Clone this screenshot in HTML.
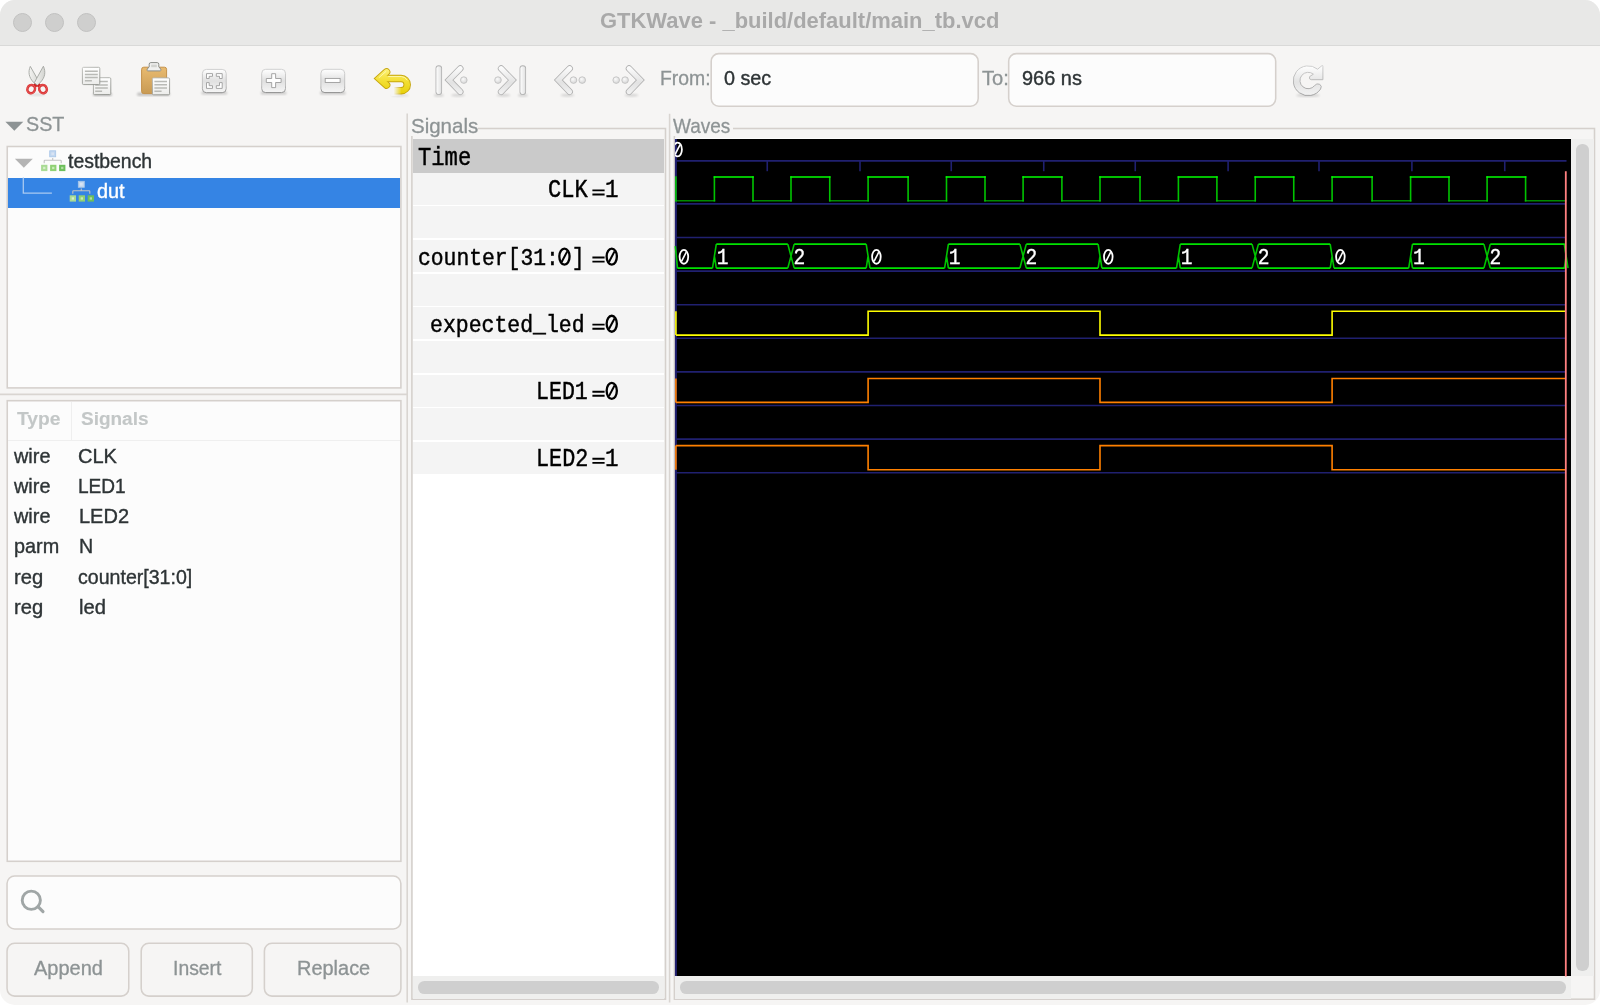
<!DOCTYPE html>
<html>
<head>
<meta charset="utf-8">
<title>GTKWave</title>
<style>
*{box-sizing:border-box;margin:0;padding:0}
html,body{width:1600px;height:1005px;overflow:hidden;background:#fff}
body{font-family:"Liberation Sans",sans-serif;font-size:18.9px;color:#2e3436;position:relative}
.abs{position:absolute}
.win{will-change:transform;position:absolute;left:0;top:0;width:1600px;height:1005px;background:#f6f5f4;border-radius:15px;overflow:hidden}
.titlebar{position:absolute;left:0;top:0;width:1600px;height:45.5px;background:#e8e8e7;border-bottom:1.5px solid #d9d9d8}
.tl{position:absolute;top:12.7px;width:19.2px;height:19.2px;border-radius:50%;background:#cfcfce;border:1px solid #c1c1c0}
.t{position:absolute;white-space:nowrap;transform-origin:0 0}
.sigrow{position:absolute;left:413px;width:250.9px;background:#f4f4f4}
</style>
</head>
<body>
<div class="win">
  <!-- title bar -->
  <div class="titlebar"></div>
  <div class="tl" style="left:12.7px"></div>
  <div class="tl" style="left:44.8px"></div>
  <div class="tl" style="left:76.7px"></div>

  <svg class="abs" style="left:0;top:0" width="1600" height="140" viewBox="0 0 1600 140" id="icons">
<defs>
  <linearGradient id="gBtn" x1="0" y1="0" x2="0" y2="1"><stop offset="0" stop-color="#ffffff"/><stop offset=".5" stop-color="#e0e0e0"/><stop offset="1" stop-color="#f6f6f6"/></linearGradient>
  <linearGradient id="gBtnS" x1="0" y1="0" x2="0" y2="1"><stop offset="0" stop-color="#d0d0d0"/><stop offset=".7" stop-color="#bdbdbd"/><stop offset="1" stop-color="#8e8e8e"/></linearGradient>
  <linearGradient id="gChev" x1="0" y1="0" x2="0" y2="1"><stop offset="0" stop-color="#ffffff"/><stop offset=".55" stop-color="#e3e3e3"/><stop offset="1" stop-color="#f2f2f2"/></linearGradient>
  <linearGradient id="gChevS" x1="0" y1="0" x2="0" y2="1"><stop offset="0" stop-color="#cfcfcf"/><stop offset="1" stop-color="#a2a2a2"/></linearGradient>
  <linearGradient id="gPage" x1="0" y1="0" x2="0" y2="1"><stop offset="0" stop-color="#ffffff"/><stop offset="1" stop-color="#ececea"/></linearGradient>
  <linearGradient id="gBoard" x1="0" y1="0" x2="0" y2="1"><stop offset="0" stop-color="#e9bb70"/><stop offset="1" stop-color="#c89a54"/></linearGradient>
  <linearGradient id="gUndo" x1="0" y1="0" x2="0" y2="1"><stop offset="0" stop-color="#fdf07a"/><stop offset=".5" stop-color="#f3df2e"/><stop offset="1" stop-color="#e3cb08"/></linearGradient>
  <linearGradient id="gUndoFade" x1="0" y1="0" x2="1" y2="0"><stop offset="0" stop-color="#f6f5f4" stop-opacity="1"/><stop offset=".25" stop-color="#f6f5f4" stop-opacity="1"/><stop offset="1" stop-color="#f6f5f4" stop-opacity="0"/></linearGradient>
  <radialGradient id="gDot" cx=".4" cy=".35" r=".7"><stop offset="0" stop-color="#fafafa"/><stop offset="1" stop-color="#d4d4d4"/></radialGradient>
  <linearGradient id="gBlade" x1="0" y1="0" x2="1" y2="0"><stop offset="0" stop-color="#f4f4f2"/><stop offset="1" stop-color="#d3d4d0"/></linearGradient>
  <filter id="sh" x="-30%" y="-30%" width="160%" height="160%"><feGaussianBlur stdDeviation="1.3"/></filter>
  <linearGradient id="gChevU" gradientUnits="userSpaceOnUse" x1="0" y1="65" x2="0" y2="95"><stop offset="0" stop-color="#ffffff"/><stop offset=".6" stop-color="#e2e2e2"/><stop offset="1" stop-color="#f3f3f3"/></linearGradient>
  <linearGradient id="gBarU" gradientUnits="userSpaceOnUse" x1="436" y1="0" x2="442" y2="0"><stop offset="0" stop-color="#ffffff"/><stop offset="1" stop-color="#dedede"/></linearGradient>
  <linearGradient id="gBarU2" gradientUnits="userSpaceOnUse" x1="520" y1="0" x2="526" y2="0"><stop offset="0" stop-color="#ffffff"/><stop offset="1" stop-color="#dedede"/></linearGradient>
  <g id="zb">
    <rect x="-13" y="10.6" width="26" height="3" rx="1.5" fill="#000" opacity=".17" filter="url(#sh)"/>
    <rect x="-11.9" y="-11.6" width="23.8" height="23.3" rx="4" fill="url(#gBtn)" stroke="url(#gBtnS)" stroke-width="1"/>
  </g>
  <linearGradient id="gUndoU" gradientUnits="userSpaceOnUse" x1="0" y1="68" x2="0" y2="95"><stop offset="0" stop-color="#fdf280"/><stop offset=".45" stop-color="#f4e038"/><stop offset="1" stop-color="#e6cf06"/></linearGradient>
  <linearGradient id="gPgS" x1="0" y1="0" x2=".6" y2="1"><stop offset="0" stop-color="#bbbcb8"/><stop offset="1" stop-color="#8e908b"/></linearGradient>
</defs>

<!-- scissors -->
<g>
  <ellipse cx="37" cy="94.6" rx="9" ry="1.2" fill="#000" opacity=".10" filter="url(#sh)"/>
  <path d="M30.3 66.4C27.9 72 28.9 77.4 33.4 82.2L36.5 85.4L39.4 82.4Z" fill="url(#gBlade)" stroke="#a3a5a0" stroke-width=".9" stroke-linejoin="round"/>
  <path d="M43.4 66.2C46 72 45 77.5 40.5 82.2L37.5 85.4L34.4 82.6Z" fill="url(#gBlade)" stroke="#a3a5a0" stroke-width=".9" stroke-linejoin="round"/>
  <path d="M33.8 84.4L36.8 86.6M40.4 84.4L37.4 86.6" stroke="#cc2222" stroke-width="2.4" fill="none"/>
  <g fill="none" stroke="#d83131" stroke-width="2.5">
    <ellipse cx="31.2" cy="89.1" rx="3.75" ry="4.1" transform="rotate(20 31.2 89.1)"/>
    <ellipse cx="43" cy="89.1" rx="3.75" ry="4.1" transform="rotate(-20 43 89.1)"/>
  </g>
  <g fill="none" stroke="#ef6a6a" stroke-width=".8" opacity=".75">
    <ellipse cx="31.2" cy="89.1" rx="3.9" ry="4.25" transform="rotate(20 31.2 89.1)"/>
    <ellipse cx="43" cy="89.1" rx="3.9" ry="4.25" transform="rotate(-20 43 89.1)"/>
  </g>
</g>

<!-- copy -->
<g>
  <rect x="93" y="93" width="19" height="3" rx="1.5" fill="#000" opacity=".25" filter="url(#sh)"/>
  <rect x="93.4" y="77.7" width="17.4" height="16.9" rx="1.2" fill="url(#gPage)" stroke="url(#gPgS)" stroke-width=".9"/>
  <path d="M95.2 81.6H107.8M95.2 84.9H107.8M95.2 88H107.8M95.2 91.2H102.1" stroke="#b9bab6" stroke-width="1.5"/>
  <rect x="82.4" y="67.3" width="17.4" height="17.3" rx="1.2" fill="url(#gPage)" stroke="url(#gPgS)" stroke-width=".9"/>
  <path d="M84.9 71.2H97.8M84.9 74.4H97.8M84.9 77.5H97.8M84.9 80.7H91.9" stroke="#b9bab6" stroke-width="1.5"/>
</g>

<!-- paste -->
<g>
  <rect x="137" y="92.5" width="33" height="3.4" rx="1.7" fill="#000" opacity=".2" filter="url(#sh)"/>
  <rect x="141.6" y="67.2" width="25" height="26.4" rx="2.2" fill="url(#gBoard)" stroke="#c4914a" stroke-width="1"/>
  <path d="M149.2 66.8V64.2Q149.2 62.6 150.8 62.6H157.2Q158.8 62.6 158.8 64.2V66.8L160.8 69.2V70.4Q160.8 70.9 160.2 70.9H147.8Q147.2 70.9 147.2 70.4V69.2Z" fill="#f0f0ee" stroke="#8b8d88" stroke-width="1" stroke-linejoin="round"/>
  <rect x="151.2" y="64.6" width="5.6" height="2.6" fill="#d2d3cf"/>
  <rect x="152.4" y="77.9" width="17.2" height="16.9" rx="1.2" fill="url(#gPage)" stroke="url(#gPgS)" stroke-width=".9"/>
  <path d="M154.4 81.5H167M154.4 84.8H167M154.4 88H167M154.4 91.2H161.6" stroke="#b9bab6" stroke-width="1.5"/>
</g>

<!-- zoom fit / in / out -->
<use href="#zb" x="214.3" y="81"/>
<use href="#zb" x="273.6" y="80.9"/>
<use href="#zb" x="332.8" y="80.9"/>
<g fill="#fff" stroke="#979797" stroke-width=".85" stroke-linejoin="miter">
  <path d="M206.5 73.6H212.5V76.3H209.2V78.5H206.5Z"/>
  <path d="M222.2 73.6H216.3V76.3H219.5V78.5H222.2Z"/>
  <path d="M206.5 88.4H212.5V85.7H209.2V82.6H206.5Z"/>
  <path d="M222.2 88.4H216.3V85.7H219.5V82.6H222.2Z"/>
  <path d="M271.7 73.7H275.6V78.5H281.1V82.5H275.6V87.6H271.7V82.5H266.3V78.5H271.7Z"/>
  <rect x="325.2" y="78.4" width="14.9" height="4"/>
</g>

<!-- undo -->
<g fill="none" stroke-linecap="round" stroke-linejoin="miter" stroke-miterlimit="6">
  <ellipse cx="400" cy="95.4" rx="9" ry="1.3" fill="#000" stroke="none" opacity=".10" filter="url(#sh)"/>
  <g stroke="#c6a60e" stroke-width="7.5">
    <path d="M379.5 78.5H401.1A6.125 6.125 0 0 1 401.1 90.75H392.5" stroke-linecap="butt"/>
    <path d="M386.6 71.9L379.2 78.5L386.6 85.1"/>
  </g>
  <g stroke="url(#gUndoU)" stroke-width="5.7">
    <path d="M379.5 78.5H401.1A6.125 6.125 0 0 1 401.1 90.75H392.5" stroke-linecap="butt"/>
    <path d="M386.6 71.9L379.2 78.5L386.6 85.1"/>
  </g>
  <path d="M385.8 71.6L379.2 77.5M388.6 76.5H401.4A7 7 0 0 1 407 80" stroke="#fffbc4" stroke-width="1" opacity=".75"/>
  <rect x="391" y="86" width="10.5" height="10" fill="url(#gUndoFade)" stroke="none"/>
</g>

<!-- nav chevrons -->
<g fill="#000" opacity=".13" filter="url(#sh)">
  <ellipse cx="438.8" cy="95.2" rx="5" ry="1.5"/><ellipse cx="458" cy="95.2" rx="7" ry="1.5"/><ellipse cx="522.8" cy="95.2" rx="5" ry="1.5"/><ellipse cx="503.5" cy="95.2" rx="7" ry="1.5"/>
  <ellipse cx="567.5" cy="95.2" rx="7" ry="1.5"/><ellipse cx="631.5" cy="95.2" rx="7" ry="1.5"/>
</g>
<g fill="none" stroke-linecap="round" stroke-linejoin="miter" stroke-miterlimit="10">
  <g stroke="#b0b0b0" stroke-width="6.5">
    <path d="M438.8 68.6V91.8"/><path d="M522.8 68.6V91.8"/>
    <path id="cl" d="M460.3 68.5L449 80.1L460.3 91.7"/>
    <path id="cr" d="M501.1 68.5L512.4 80.1L501.1 91.7"/>
    <use href="#cl" x="109.4"/><use href="#cr" x="127.9"/>
  </g>
  <g stroke="url(#gChevU)" stroke-width="4.9">
    <path d="M438.8 68.6V91.8" stroke="url(#gBarU)"/><path d="M522.8 68.6V91.8" stroke="url(#gBarU2)"/>
    <use href="#cl"/><use href="#cr"/>
    <use href="#cl" x="109.4"/><use href="#cr" x="127.9"/>
  </g>
</g>
<g fill="url(#gDot)" stroke="#bcbcbc" stroke-width=".8">
  <circle cx="463.8" cy="80.1" r="3.3"/>
  <circle cx="498" cy="80.1" r="3.3"/>
  <circle cx="573.5" cy="80.1" r="3.3"/><circle cx="582.2" cy="80.1" r="3.3"/>
  <circle cx="616.2" cy="80.1" r="3.3"/><circle cx="625.1" cy="80.1" r="3.3"/>
</g>

<!-- reload -->
<g>
  <ellipse cx="1308" cy="95.4" rx="12" ry="1.6" fill="#000" opacity=".14" filter="url(#sh)"/>
  <path d="M1317.6 69.2L1322 65.6Q1322.9 65.2 1322.9 66.2V79.7H1311.2Q1308.6 79.3 1309.6 76.6L1313.4 74.2A8.2 8.2 0 1 0 1314.6 85.6Q1316.6 83 1319.6 84.2Q1322.4 86 1320.6 89A14.9 14.9 0 1 1 1317.6 69.2Z" fill="url(#gChev)" stroke="url(#gChevS)" stroke-width="1" stroke-linejoin="round"/>
</g>
</svg>

  <svg class="abs" style="left:0;top:0" width="1600" height="1005" viewBox="0 0 1600 1005" id="boxes">
    <g fill="#fcfcfc" stroke="#d5d0cc" stroke-width="1.56">
      <rect x="711.2" y="53.6" width="267" height="52.6" rx="7.6"/>
      <rect x="1008.7" y="53.6" width="267" height="52.6" rx="7.6"/>
      <rect x="7.25" y="146.5" width="393.65" height="241.4"/>
      <rect x="7.25" y="400.7" width="393.65" height="460.6"/>
      <rect x="7.05" y="876" width="393.8" height="53" rx="7.6"/>
    </g>
    <g fill="none" stroke="#d5d0cc" stroke-width="1.56">
      <rect x="7.05" y="943.3" width="121.7" height="52.8" rx="7.6"/>
      <rect x="141.2" y="943.3" width="111.1" height="52.8" rx="7.6"/>
      <rect x="264.4" y="943.3" width="136.5" height="52.8" rx="7.6"/>
      <rect x="411.9" y="128.5" width="253.6" height="870.7"/>
      <rect x="674.4" y="128.5" width="920.1" height="870.7"/>
      <path d="M407.2 113.6V1002.4M669.6 113.7V1002.4M0 394.4H407.2" stroke="#d9d5d1"/>
    </g>
  </svg>
  <!-- toolbar labels/entries -->

  <!-- SST -->
  <div class="abs" style="left:8px;top:177.6px;width:392px;height:30px;background:#3584e4"></div>

  <!-- signal list -->
  <div class="abs" style="left:8px;top:439.5px;width:392px;height:1.5px;background:#efefef"></div>
  <div class="abs" style="left:70.8px;top:401.5px;width:1.5px;height:38px;background:#efefef"></div>

  <!-- search + buttons -->

<svg class="abs" style="left:0;top:0" width="420" height="1005" viewBox="0 0 420 1005" id="deco">
<defs>
  <g id="hier">
    <rect x="9.5" y="0.4" width="6" height="6" fill="#c3d8f0" stroke="#a9c6e8" stroke-width=".8"/>
    <rect x="11.2" y="2.1" width="2.6" height="2.6" fill="#d9e3f3"/>
    <path d="M12.5 7.6V9.4M4 12.8V10.6Q4 9.9 4.7 9.9H20.3Q21 9.9 21 10.6V12.8" fill="none" stroke="#c2c2c2" stroke-width="1.1"/>
    <rect x="0.9" y="14.4" width="6.3" height="6.3" fill="#a9db94"/>
    <rect x="9.9" y="14.4" width="6.3" height="6.3" fill="#90d174"/>
    <rect x="18.9" y="14.4" width="6.3" height="6.3" fill="#6dbf5b"/>
    <rect x="2.9" y="16.4" width="2.3" height="2.3" fill="#d6efc9"/><rect x="11.9" y="16.4" width="2.3" height="2.3" fill="#c9ebb8"/><rect x="20.9" y="16.4" width="2.3" height="2.3" fill="#b2dfa3"/>
  </g>
</defs>
<path d="M5.4 121.7H23.3L14.35 130.8Z" fill="#8d9394"/>
<path d="M14.9 158.7H32.8L23.85 167.8Z" fill="#b4b4b4"/>
<use href="#hier" x="40.2" y="150.4"/>
<use href="#hier" x="68.8" y="180.9"/>
<path d="M23.3 177.6V193.1H51.9" fill="none" stroke="#a9c9f1" stroke-width="1.3"/>
<g fill="none" stroke="#a0a6a6" stroke-width="2.9">
  <circle cx="31.3" cy="900.25" r="9.1"/>
  <path d="M38 906.6L43 911.7" stroke-linecap="round" stroke-width="3.1"/>
</g>
</svg>
  <!-- paned separators -->

  <!-- Signals frame -->
  <div class="abs" style="left:413px;top:139px;width:250.9px;height:837px;background:#fff"></div>
  <div class="abs" style="left:413px;top:139px;width:250.9px;height:33.6px;background:#cacaca"></div>
  <div class="sigrow" style="top:172.60px;height:32px"></div>
  <div class="sigrow" style="top:206.25px;height:32px"></div>
  <div class="sigrow" style="top:239.90px;height:32px"></div>
  <div class="sigrow" style="top:273.55px;height:32px"></div>
  <div class="sigrow" style="top:307.20px;height:32px"></div>
  <div class="sigrow" style="top:340.85px;height:32px"></div>
  <div class="sigrow" style="top:374.50px;height:32px"></div>
  <div class="sigrow" style="top:408.15px;height:32px"></div>
  <div class="sigrow" style="top:441.80px;height:32px"></div>
  <!-- signals hscroll -->
  <div class="abs" style="left:413px;top:976px;width:250.9px;height:22.5px;background:#efefee"></div>
  <div class="abs" style="left:417.8px;top:981px;width:241.5px;height:12.8px;border-radius:6.4px;background:#cfcfcf"></div>

  <!-- Waves frame -->
  <div class="abs" style="left:675px;top:137.6px;width:896px;height:2px;background:#fdfdfd"></div>
  <!-- wave scrollbars -->
  <div class="abs" style="left:675px;top:976px;width:896px;height:22.7px;background:#efefee"></div>
  <div class="abs" style="left:680px;top:981px;width:886px;height:12.8px;border-radius:6.4px;background:#cfcfcf"></div>
  <div class="abs" style="left:1571px;top:139px;width:23px;height:837px;background:#efefee"></div>
  <div class="abs" style="left:1576.2px;top:143.8px;width:12.4px;height:827.4px;border-radius:6.2px;background:#cfcfcf"></div>

  <div class="abs" style="left:409.5px;top:114px;width:68.5px;height:22px;background:#f6f5f4"></div>
  <div class="abs" style="left:671.5px;top:114px;width:61px;height:22px;background:#f6f5f4"></div>
<div class="t" style="left:599.59px;top:6.35px;font-family:'Liberation Sans',sans-serif;font-size:21.2px;font-weight:bold;color:#a9a9a9;line-height:30px;transform:scaleX(1.0364)">GTKWave - _build/default/main_tb.vcd</div>
<div class="t" style="left:660.44px;top:62.75px;font-family:'Liberation Sans',sans-serif;font-size:20.2px;font-weight:normal;color:#8d9394;line-height:30px;transform:scaleX(0.9609);-webkit-text-stroke:0.3px #8d9394">From:</div>
<div class="t" style="left:724.28px;top:62.92px;font-family:'Liberation Sans',sans-serif;font-size:19.7px;font-weight:normal;color:#2e3436;line-height:30px;transform:scaleX(1.0037);-webkit-text-stroke:0.38px #2e3436">0 sec</div>
<div class="t" style="left:982.34px;top:62.75px;font-family:'Liberation Sans',sans-serif;font-size:20.2px;font-weight:normal;color:#8d9394;line-height:30px;transform:scaleX(0.9982);-webkit-text-stroke:0.3px #8d9394">To:</div>
<div class="t" style="left:1022.25px;top:62.92px;font-family:'Liberation Sans',sans-serif;font-size:19.7px;font-weight:normal;color:#2e3436;line-height:30px;transform:scaleX(1.0129);-webkit-text-stroke:0.38px #2e3436">966 ns</div>
<div class="t" style="left:26.29px;top:109.09px;font-family:'Liberation Sans',sans-serif;font-size:20.8px;font-weight:normal;color:#8d9394;line-height:30px;transform:scaleX(0.9503);-webkit-text-stroke:0.3px #8d9394">SST</div>
<div class="t" style="left:410.53px;top:110.89px;font-family:'Liberation Sans',sans-serif;font-size:20.8px;font-weight:normal;color:#8d9394;line-height:30px;transform:scaleX(0.9851);-webkit-text-stroke:0.3px #8d9394">Signals</div>
<div class="t" style="left:673.23px;top:110.89px;font-family:'Liberation Sans',sans-serif;font-size:20.8px;font-weight:normal;color:#8d9394;line-height:30px;transform:scaleX(0.9127);-webkit-text-stroke:0.3px #8d9394">Waves</div>
<div class="t" style="left:68.18px;top:145.84px;font-family:'Liberation Sans',sans-serif;font-size:19.8px;font-weight:normal;color:#2e3436;line-height:30px;transform:scaleX(0.9810);-webkit-text-stroke:0.38px #2e3436">testbench</div>
<div class="t" style="left:97.43px;top:176.34px;font-family:'Liberation Sans',sans-serif;font-size:19.8px;font-weight:normal;color:#ffffff;line-height:30px;transform:scaleX(1.0038);-webkit-text-stroke:0.38px #ffffff">dut</div>
<div class="t" style="left:16.97px;top:403.65px;font-family:'Liberation Sans',sans-serif;font-size:19.2px;font-weight:bold;color:#c3c7c7;line-height:30px;transform:scaleX(1.0008);-webkit-text-stroke:0.15px #c3c7c7">Type</div>
<div class="t" style="left:81.35px;top:403.65px;font-family:'Liberation Sans',sans-serif;font-size:19.2px;font-weight:bold;color:#c3c7c7;line-height:30px;transform:scaleX(0.9892);-webkit-text-stroke:0.15px #c3c7c7">Signals</div>
<div class="t" style="left:14.41px;top:440.64px;font-family:'Liberation Sans',sans-serif;font-size:19.8px;font-weight:normal;color:#2e3436;line-height:30px;transform:scaleX(1.0050);-webkit-text-stroke:0.38px #2e3436">wire</div>
<div class="t" style="left:78.47px;top:440.64px;font-family:'Liberation Sans',sans-serif;font-size:19.8px;font-weight:normal;color:#2e3436;line-height:30px;transform:scaleX(1.0127);-webkit-text-stroke:0.38px #2e3436">CLK</div>
<div class="t" style="left:14.41px;top:470.89px;font-family:'Liberation Sans',sans-serif;font-size:19.8px;font-weight:normal;color:#2e3436;line-height:30px;transform:scaleX(1.0050);-webkit-text-stroke:0.38px #2e3436">wire</div>
<div class="t" style="left:77.64px;top:470.89px;font-family:'Liberation Sans',sans-serif;font-size:19.8px;font-weight:normal;color:#2e3436;line-height:30px;transform:scaleX(0.9641);-webkit-text-stroke:0.38px #2e3436">LED1</div>
<div class="t" style="left:14.41px;top:501.04px;font-family:'Liberation Sans',sans-serif;font-size:19.8px;font-weight:normal;color:#2e3436;line-height:30px;transform:scaleX(1.0050);-webkit-text-stroke:0.38px #2e3436">wire</div>
<div class="t" style="left:78.56px;top:501.04px;font-family:'Liberation Sans',sans-serif;font-size:19.8px;font-weight:normal;color:#2e3436;line-height:30px;transform:scaleX(1.0109);-webkit-text-stroke:0.38px #2e3436">LED2</div>
<div class="t" style="left:14.39px;top:531.34px;font-family:'Liberation Sans',sans-serif;font-size:19.8px;font-weight:normal;color:#2e3436;line-height:30px;transform:scaleX(1.0015);-webkit-text-stroke:0.38px #2e3436">parm</div>
<div class="t" style="left:78.54px;top:531.34px;font-family:'Liberation Sans',sans-serif;font-size:19.8px;font-weight:normal;color:#2e3436;line-height:30px;transform:scaleX(0.9930);-webkit-text-stroke:0.38px #2e3436">N</div>
<div class="t" style="left:14.38px;top:561.64px;font-family:'Liberation Sans',sans-serif;font-size:19.8px;font-weight:normal;color:#2e3436;line-height:30px;transform:scaleX(1.0198);-webkit-text-stroke:0.38px #2e3436">reg</div>
<div class="t" style="left:78.36px;top:561.64px;font-family:'Liberation Sans',sans-serif;font-size:19.8px;font-weight:normal;color:#2e3436;line-height:30px;transform:scaleX(0.9895);-webkit-text-stroke:0.38px #2e3436">counter[31:0]</div>
<div class="t" style="left:14.38px;top:592.04px;font-family:'Liberation Sans',sans-serif;font-size:19.8px;font-weight:normal;color:#2e3436;line-height:30px;transform:scaleX(1.0198);-webkit-text-stroke:0.38px #2e3436">reg</div>
<div class="t" style="left:78.58px;top:592.04px;font-family:'Liberation Sans',sans-serif;font-size:19.8px;font-weight:normal;color:#2e3436;line-height:30px;transform:scaleX(1.0194);-webkit-text-stroke:0.38px #2e3436">led</div>
<div class="t" style="left:33.56px;top:952.61px;font-family:'Liberation Sans',sans-serif;font-size:19.6px;font-weight:normal;color:#8d9394;line-height:30px;transform:scaleX(1.0206);-webkit-text-stroke:0.3px #8d9394">Append</div>
<div class="t" style="left:172.65px;top:952.61px;font-family:'Liberation Sans',sans-serif;font-size:19.6px;font-weight:normal;color:#8d9394;line-height:30px;transform:scaleX(0.9886);-webkit-text-stroke:0.3px #8d9394">Insert</div>
<div class="t" style="left:296.59px;top:952.61px;font-family:'Liberation Sans',sans-serif;font-size:19.6px;font-weight:normal;color:#8d9394;line-height:30px;transform:scaleX(1.0183);-webkit-text-stroke:0.3px #8d9394">Replace</div>
<div class="t" style="left:418.37px;top:144.19px;font-family:'Liberation Mono',monospace;font-size:25.2px;font-weight:normal;color:#000;line-height:30px;transform:scaleX(0.8806);-webkit-text-stroke:0.45px #000">Time</div>
<div class="t" style="left:548.26px;top:176.49px;font-family:'Liberation Mono',monospace;font-size:25.6px;font-weight:normal;color:#000;line-height:30px;transform:scaleX(0.8609);-webkit-text-stroke:0.45px #000">CLK</div>
<div class="t" style="left:418.03px;top:243.96px;font-family:'Liberation Mono',monospace;font-size:24.2px;font-weight:normal;color:#000;line-height:30px;transform:scaleX(0.8826);-webkit-text-stroke:0.45px #000">counter[31:<span style="visibility:hidden">0</span>]</div>
<div class="t" style="left:430.32px;top:311.06px;font-family:'Liberation Mono',monospace;font-size:24.2px;font-weight:normal;color:#000;line-height:30px;transform:scaleX(0.8873);-webkit-text-stroke:0.45px #000">expected_led</div>
<div class="t" style="left:535.82px;top:377.79px;font-family:'Liberation Mono',monospace;font-size:25.6px;font-weight:normal;color:#000;line-height:30px;transform:scaleX(0.8432);-webkit-text-stroke:0.45px #000">LED1</div>
<div class="t" style="left:535.96px;top:444.89px;font-family:'Liberation Mono',monospace;font-size:25.6px;font-weight:normal;color:#000;line-height:30px;transform:scaleX(0.8519);-webkit-text-stroke:0.45px #000">LED2</div>
<div class="t" style="left:605.22px;top:176.49px;font-family:'Liberation Mono',monospace;font-size:25.6px;font-weight:normal;color:#000;line-height:30px;transform:scaleX(0.8800);-webkit-text-stroke:0.45px #000">1</div>
<div class="t" style="left:605.22px;top:444.89px;font-family:'Liberation Mono',monospace;font-size:25.6px;font-weight:normal;color:#000;line-height:30px;transform:scaleX(0.8800);-webkit-text-stroke:0.45px #000">1</div>
  <svg class="abs" style="left:0;top:0" width="1600" height="1005" viewBox="0 0 1600 1005" id="wave">
<rect x="675" y="139" width="896" height="837" fill="#000"/>
<g stroke="#202070" stroke-width="1.6" fill="none">
<path d="M675 160.9H1566.5"/>
<path d="M767.25 161V171.2"/>
<path d="M860 161V171.2"/>
<path d="M951.25 161V171.2"/>
<path d="M1043.75 161V171.2"/>
<path d="M1135.25 161V171.2"/>
<path d="M1228.1 161V171.2"/>
<path d="M1319 161V171.2"/>
<path d="M1411.9 161V171.2"/>
<path d="M1504.75 161V171.2"/>
<path d="M675 203.90H1565"/>
<path d="M675 237.50H1565"/>
<path d="M675 271.10H1565"/>
<path d="M675 304.70H1565"/>
<path d="M675 338.30H1565"/>
<path d="M675 371.90H1565"/>
<path d="M675 405.50H1565"/>
<path d="M675 439.10H1565"/>
<path d="M675 472.70H1565"/>
<path d="M675.9 139V976" stroke-width="2"/>
</g>
<g stroke-width="1.6" fill="none" stroke-linecap="square">
<path stroke="#008a00" d="M675.9 200.8H714.4M753.0 200.8H791.0M829.75 200.8H868.1M908.1 200.8H946.5M985.0 200.8H1023.1M1061.9 200.8H1100.0M1140.0 200.8H1178.4M1216.9 200.8H1255.25M1293.75 200.8H1332.1M1372.1 200.8H1410.6M1449.0 200.8H1487.1M1525.6 200.8H1565.8"/>
<path stroke="#00c400" d="M714.4 177.0V200.8M753.0 177.0V200.8M791.0 177.0V200.8M829.75 177.0V200.8M868.1 177.0V200.8M908.1 177.0V200.8M946.5 177.0V200.8M985.0 177.0V200.8M1023.1 177.0V200.8M1061.9 177.0V200.8M1100.0 177.0V200.8M1140.0 177.0V200.8M1178.4 177.0V200.8M1216.9 177.0V200.8M1255.25 177.0V200.8M1293.75 177.0V200.8M1332.1 177.0V200.8M1372.1 177.0V200.8M1410.6 177.0V200.8M1449.0 177.0V200.8M1487.1 177.0V200.8M1525.6 177.0V200.8M675.9 177.0V200.8"/>
<path stroke="#00ff00" d="M714.4 177.0H753.0M791.0 177.0H829.75M868.1 177.0H908.1M946.5 177.0H985.0M1023.1 177.0H1061.9M1100.0 177.0H1140.0M1178.4 177.0H1216.9M1255.25 177.0H1293.75M1332.1 177.0H1372.1M1410.6 177.0H1449.0M1487.1 177.0H1525.6"/>
</g>
<g stroke-width="1.6" fill="none">
<path stroke="#00c400" d="M712.50 268.1L716.30 244.1M714.40 256.1L716.30 268.1M787.80 244.1L794.20 268.1M787.80 268.1L794.20 244.1M866.20 244.1L870.00 268.1M866.20 268.1L868.10 256.1M944.60 268.1L948.40 244.1M946.50 256.1L948.40 268.1M1019.90 244.1L1026.30 268.1M1019.90 268.1L1026.30 244.1M1098.10 244.1L1101.90 268.1M1098.10 268.1L1100.00 256.1M1176.50 268.1L1180.30 244.1M1178.40 256.1L1180.30 268.1M1252.05 244.1L1258.45 268.1M1252.05 268.1L1258.45 244.1M1330.20 244.1L1334.00 268.1M1330.20 268.1L1332.10 256.1M1408.70 268.1L1412.50 244.1M1410.60 256.1L1412.50 268.1M1483.90 244.1L1490.30 268.1M1483.90 268.1L1490.30 244.1M675.30 246.1L677.50 268.1M1564.30 244.1L1568.00 268.1M1564.30 268.1L1566.20 256.1"/>
<path stroke="#00e200" d="M677.40 268.1H712.50M716.30 268.1H787.80M716.30 244.1H787.80M794.20 268.1H866.20M794.20 244.1H866.20M870.00 268.1H944.60M948.40 268.1H1019.90M948.40 244.1H1019.90M1026.30 268.1H1098.10M1026.30 244.1H1098.10M1101.90 268.1H1176.50M1180.30 268.1H1252.05M1180.30 244.1H1252.05M1258.45 268.1H1330.20M1258.45 244.1H1330.20M1334.00 268.1H1408.70M1412.50 268.1H1483.90M1412.50 244.1H1483.90M1490.30 268.1H1564.80M1490.30 244.1H1564.80"/>
</g>
<path stroke="#ffff00" stroke-width="1.6" fill="none" stroke-linejoin="miter" d="M675.9 311.3V335.1M675.9 335.1H868.1V311.3H1100.0V335.1H1332.1V311.3H1565.8"/>
<path stroke="#ff8000" stroke-width="1.6" fill="none" stroke-linejoin="miter" d="M675.9 378.5V402.4M675.9 402.4H868.1V378.5H1100.0V402.4H1332.1V378.5H1565.8"/>
<path stroke="#ff8000" stroke-width="1.6" fill="none" stroke-linejoin="miter" d="M675.9 445.6V469.8M675.9 445.6H868.1V469.8H1100.0V445.6H1332.1V469.8H1565.8"/>
<path stroke="#ff8080" stroke-width="1.8" d="M1565.8 171.3V976.6"/>
<g font-family="Liberation Mono, monospace" font-size="22.8" fill="#fff" stroke="#fff" stroke-width=".35">
<g fill="none" stroke="#fff"><ellipse cx="683.90" cy="256.80" rx="4.3" ry="6.95" stroke-width="1.8"/><path d="M681.53 261.39L686.26 252.21" stroke-width="1.6"/></g>
<text transform="translate(716.70 264.3) scale(.86 1)">1</text>
<text transform="translate(793.40 264.3) scale(.86 1)">2</text>
<g fill="none" stroke="#fff"><ellipse cx="876.40" cy="256.80" rx="4.3" ry="6.95" stroke-width="1.8"/><path d="M874.03 261.39L878.76 252.21" stroke-width="1.6"/></g>
<text transform="translate(948.80 264.3) scale(.86 1)">1</text>
<text transform="translate(1025.50 264.3) scale(.86 1)">2</text>
<g fill="none" stroke="#fff"><ellipse cx="1108.30" cy="256.80" rx="4.3" ry="6.95" stroke-width="1.8"/><path d="M1105.93 261.39L1110.66 252.21" stroke-width="1.6"/></g>
<text transform="translate(1180.70 264.3) scale(.86 1)">1</text>
<text transform="translate(1257.65 264.3) scale(.86 1)">2</text>
<g fill="none" stroke="#fff"><ellipse cx="1340.40" cy="256.80" rx="4.3" ry="6.95" stroke-width="1.8"/><path d="M1338.03 261.39L1342.76 252.21" stroke-width="1.6"/></g>
<text transform="translate(1412.90 264.3) scale(.86 1)">1</text>
<text transform="translate(1489.50 264.3) scale(.86 1)">2</text>
</g>
<clipPath id="wc"><rect x="675" y="139" width="896" height="837"/></clipPath>
<g clip-path="url(#wc)"><g fill="none" stroke="#fff"><ellipse cx="677.60" cy="149.50" rx="4.3" ry="6.95" stroke-width="1.8"/><path d="M675.24 154.09L679.97 144.91" stroke-width="1.6"/></g></g>
<path d="M592.4 190.40H604.6M592.4 194.50H604.6" stroke="#000" stroke-width="1.9"/>
<path d="M592.4 257.50H604.6M592.4 261.60H604.6" stroke="#000" stroke-width="1.9"/>
<path d="M592.4 324.60H604.6M592.4 328.70H604.6" stroke="#000" stroke-width="1.9"/>
<path d="M592.4 391.70H604.6M592.4 395.80H604.6" stroke="#000" stroke-width="1.9"/>
<path d="M592.4 458.80H604.6M592.4 462.90H604.6" stroke="#000" stroke-width="1.9"/>
<g fill="none" stroke="#000"><ellipse cx="611.75" cy="256.65" rx="5.1" ry="8.0" stroke-width="2.3"/><path d="M608.95 261.93L614.55 251.37" stroke-width="2.0"/></g>
<g fill="none" stroke="#000"><ellipse cx="611.75" cy="323.75" rx="5.1" ry="8.0" stroke-width="2.3"/><path d="M608.95 329.03L614.55 318.47" stroke-width="2.0"/></g>
<g fill="none" stroke="#000"><ellipse cx="611.75" cy="390.85" rx="5.1" ry="8.0" stroke-width="2.3"/><path d="M608.95 396.13L614.55 385.57" stroke-width="2.0"/></g>
<g fill="none" stroke="#000"><ellipse cx="564.45" cy="256.65" rx="5.1" ry="8.0" stroke-width="2.3"/><path d="M561.65 261.93L567.25 251.37" stroke-width="2.0"/></g>
</svg>
</div>
</body>
</html>
